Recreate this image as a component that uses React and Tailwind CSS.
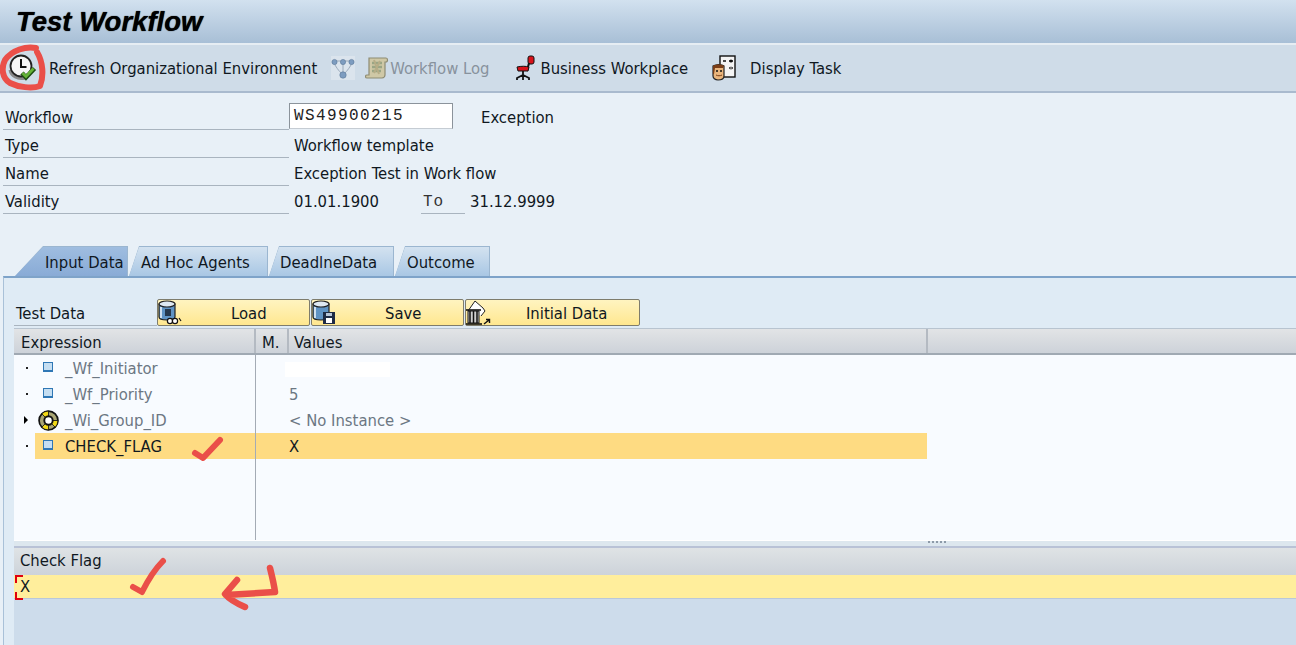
const F = "font-['DejaVu_Sans',sans-serif] [font-stretch:condensed]";

function ClockIcon() {
  return (
    <svg width="30" height="30" viewBox="0 0 30 30" className="shrink-0">
      <path d="M3 17c1 6 8 10 15 8" fill="none" stroke="#8a8a8a" strokeWidth="3" />
      <circle cx="14" cy="13" r="10.500" fill="#f6f6f6" stroke="#222" strokeWidth="1.800" />
      <path d="M14 6v8h5.500" fill="none" stroke="#111" strokeWidth="2" />
      <path d="M15 20l4 4.500 8.500-9" fill="none" stroke="#1f4d12" strokeWidth="4.500" />
      <path d="M15.500 20l3.500 3.500 7.500-8" fill="none" stroke="#64b236" strokeWidth="2.800" />
    </svg>
  );
}

function NetIcon() {
  return (
    <svg width="24" height="24" viewBox="0 0 24 24" className="shrink-0">
      <rect width="24" height="24" fill="#dbe4ed" />
      <path d="M3 7c3 6 6 9 9 12M21 7c-3 6-6 9-9 12M12 8v10M4 5h16" stroke="#9aa9ba" strokeWidth="1" fill="none" />
      <circle cx="3.500" cy="6" r="2.600" fill="#7d9cc0" stroke="#5c7999" strokeWidth=".6" />
      <circle cx="12" cy="6" r="2.600" fill="#7d9cc0" stroke="#5c7999" strokeWidth=".6" />
      <circle cx="20.500" cy="6" r="2.600" fill="#7d9cc0" stroke="#5c7999" strokeWidth=".6" />
      <circle cx="12" cy="19" r="3.200" fill="#7d9cc0" stroke="#5c7999" strokeWidth=".6" />
    </svg>
  );
}

function ScrollIcon() {
  return (
    <svg width="24" height="24" viewBox="0 0 24 24" className="shrink-0">
      <path d="M4 2h17c2 0 2 4 0 4h-1v13c0 1-1 3-3 3H2c-2 0-2-3 0-3h2z" fill="#cfc8a6" stroke="#8e8b72" strokeWidth="1.200" />
      <path d="M7 7h10M7 11h10M7 15h9" stroke="#9aa585" strokeWidth="2.400" />
      <path d="M9 4l5 14M15 5l-6 12" stroke="#b6ad87" strokeWidth="2" />
    </svg>
  );
}

function ChairIcon() {
  return (
    <svg width="22" height="26" viewBox="0 0 22 26" className="shrink-0">
      <rect x="13" y="1" width="6" height="8" rx="2" fill="#d8121a" stroke="#111" strokeWidth="1" />
      <path d="M14 8l-2 8" stroke="#111" strokeWidth="2" />
      <path d="M2 12c4-1 9-1 12 0l-1 4H3z" fill="#d8121a" stroke="#111" strokeWidth="1" />
      <path d="M8 16v4M2 25v-2l6-3 6 3v2M8 20v5" stroke="#111" strokeWidth="1.800" fill="none" />
    </svg>
  );
}

function TaskIcon() {
  return (
    <svg width="26" height="26" viewBox="0 0 26 26" className="shrink-0">
      <rect x="9" y="1" width="15" height="21" fill="#f4f4f4" stroke="#111" strokeWidth="1.400" />
      <path d="M12 6h3M18 6h4M18 13h4" stroke="#111" strokeWidth="1.500" />
      <circle cx="20" cy="6" r="1.500" fill="#111" />
      <circle cx="20" cy="13" r="1.500" fill="#777" />
      <path d="M2 11c3-2 9-2 11 0v10c0 3-3 4-6 4s-5-2-5-4z" fill="#eab67d" stroke="#222" strokeWidth="1.200" />
      <path d="M2 11c3-2 9-2 11 0l-1 2H4l-1 6H2z" fill="#7a3d16" />
      <circle cx="6" cy="16" r="1" fill="#111" />
      <circle cx="10" cy="16" r="1" fill="#111" />
      <path d="M5 20c2 1 4 1 6 0" stroke="#7a3d16" fill="none" />
    </svg>
  );
}

function DbIcon({ kind }) {
  return (
    <svg width="26" height="26" viewBox="0 0 26 26" className="shrink-0">
      <path d="M2 4v13c0 2 4 3 8 3s8-1 8-3V4z" fill="#5f93c4" stroke="#222" strokeWidth="1.200" />
      <ellipse cx="10" cy="4" rx="8" ry="3" fill="#dfe9f3" stroke="#222" strokeWidth="1.200" />
      <path d="M4 7v11" stroke="#cfe0f0" strokeWidth="2" />
      {kind === "load" ? (
        <g>
          <rect x="8" y="9" width="6" height="7" fill="#25384d" />
          <circle cx="13" cy="21" r="2.600" fill="#fff" stroke="#111" strokeWidth="1.200" />
          <circle cx="18" cy="21" r="2.600" fill="#fff" stroke="#111" strokeWidth="1.200" />
          <path d="M22 18l2 3" stroke="#111" strokeWidth="1.200" />
        </g>
      ) : (
        <g>
          <rect x="12" y="12" width="12" height="12" fill="#1e2b45" />
          <rect x="15" y="18" width="6" height="5" fill="#fff" />
          <rect x="15" y="13" width="6" height="3" fill="#b7c6d9" />
        </g>
      )}
    </svg>
  );
}

function TrashIcon() {
  return (
    <svg width="26" height="26" viewBox="0 0 26 26" className="shrink-0">
      <path d="M3 11L10 1l8 7 2 3-4 5" fill="#fff" stroke="#222" strokeWidth="1" />
      <path d="M1 10h15" stroke="#111" strokeWidth="1.600" />
      <path d="M3 11h11v12H3z" fill="#cfcfcf" stroke="#111" strokeWidth="1" />
      <path d="M5 11v12M8.500 11v12M12 11v12" stroke="#111" strokeWidth="1.500" />
      <path d="M1 24h16" stroke="#111" strokeWidth="1.600" />
      <path d="M19 24l5-4M21 19.500h3.500v3.500" stroke="#111" strokeWidth="1.400" fill="none" />
    </svg>
  );
}

function LeafIcon() {
  return (
    <span className="w-[10px] h-[10px] shrink-0 -mt-[3px] bg-[#c5def2] border border-[#2f77b5] border-b-2" />
  );
}

function LifeRing() {
  return (
    <svg width="21" height="21" viewBox="0 0 20 20" className="shrink-0">
      <circle cx="10" cy="10" r="9" fill="#a9a573" stroke="#111" strokeWidth="1.600" />
      <path d="M10 10L3.600 3.600A9 9 0 0 1 10 1zM10 10l9 0a9 9 0 0 1-2.600 6.400zM10 10l-6.400 6.400A9 9 0 0 0 10 19z" fill="#f2d916" stroke="#111" strokeWidth=".8" />
      <circle cx="10" cy="10" r="4" fill="#fff" stroke="#111" strokeWidth="1.800" />
    </svg>
  );
}

function Tab({ active, label, w, pad }) {
  const shape = active
    ? "[clip-path:polygon(28px_0,100%_0,100%_100%,0_100%)]"
    : "[clip-path:polygon(10px_0,100%_0,100%_100%,0_100%)]";
  return (
    <div className={`h-[30px] pt-[1px] pr-[1px] bg-[#9bb6d0] ${shape}`} style={{ width: w }}>
      <div
        className={`h-full flex items-center pt-[4px] text-[16.5px] text-[#10181f] ${shape} ${
          active ? "bg-gradient-to-b from-[#9fbde0] to-[#89abd6]" : "bg-gradient-to-b from-[#d3e2f0] to-[#a9c7e4]"
        }`}
        style={{ paddingLeft: pad }}
      >
        {label}
      </div>
    </div>
  );
}

function FormRow({ label, children }) {
  return (
    <div className="h-[28px] flex">
      <div className="w-[286px] border-b border-[#a9b4bf] flex items-center pl-[2px] pt-[6px] text-[#10181f]">{label}</div>
      <div className="flex items-center flex-1 pt-[5px]">{children}</div>
    </div>
  );
}

function Btn({ w, icon, label, textClass }) {
  return (
    <button className="h-[27px] flex items-center rounded-[2px] border border-[#7e7c6c] bg-gradient-to-b from-[#fff4c0] to-[#ffe78f] text-[16.5px] text-[#10181f] shrink-0" style={{ width: w }}>
      <span className="w-[26px] -ml-[1px] flex">{icon}</span>
      <span className={`${textClass} pt-[3px]`}>{label}</span>
    </button>
  );
}

function TreeRow({ icon, label, value, arrow, selected }) {
  return (
    <div className="h-[26px] flex text-[16.5px]">
      <div className="w-[21px] flex items-center justify-end pr-[7px] shrink-0">
        {arrow ? (
          <span className="w-0 h-0 border-y-[4px] border-y-transparent border-l-[4px] border-l-black" />
        ) : (
          <span className="w-[2px] h-[2px] bg-[#222]" />
        )}
      </div>
      <div className={`flex flex-1 items-center ${selected ? "bg-[#fedb82] text-[#10181f]" : "text-[#6c7783]"}`}>
        <span className="w-[30px] flex justify-center items-center shrink-0 pr-[4px]">{icon}</span>
        <span className="w-[224px] shrink-0 pt-[2px]">{label}</span>
        <span className="w-[638px] shrink-0 whitespace-pre pt-[2px]">{value}</span>
      </div>
      <div className="w-[369px] shrink-0" />
    </div>
  );
}

export default function App() {
  return (
    <div className={`${F} relative w-[1296px] h-[645px] overflow-hidden flex flex-col bg-[#e8f0f7] text-[16.5px] text-[#10181f]`}>
      {/* Title bar */}
      <div className="h-[43px] shrink-0 bg-gradient-to-b from-[#d2e1ef] to-[#a8bfd6] flex items-center pl-[16px]">
        <h1 className="font-['Liberation_Sans',Arial,sans-serif] text-[27.500px] font-bold italic text-black [text-shadow:0_0_1px_#000]">Test Workflow</h1>
      </div>

      {/* Toolbar */}
      <div className="h-[50px] shrink-0 bg-[#cfdce8] border-t-2 border-[#e6edf3] border-b-2 border-b-[#a9bace] flex items-center">
        <span className="ml-[7px]"><ClockIcon /></span>
        <span className="ml-[12px] pt-[2px]">Refresh Organizational Environment</span>
        <span className="ml-[14px]"><NetIcon /></span>
        <span className="ml-[10px]"><ScrollIcon /></span>
        <span className="ml-[1px] pt-[2px] text-[#88929d]">Workflow Log</span>
        <span className="ml-[26px]"><ChairIcon /></span>
        <span className="ml-[3px] pt-[2px]">Business Workplace</span>
        <span className="ml-[23px]"><TaskIcon /></span>
        <span className="ml-[13px] pt-[2px]">Display Task</span>
      </div>

      {/* Header form */}
      <div className="pt-[9px] pl-[3px] h-[153px] shrink-0 flex flex-col">
        <FormRow label="Workflow">
          <div className="w-[164px] h-[26px] -mt-[5px] bg-white border border-[#8b939b] border-b-[#c5ccd3] flex items-center pl-[4px] font-['Liberation_Mono',monospace] text-[16px] tracking-[1.400px] text-[#222]">
            WS49900215
          </div>
          <span className="ml-[28px]">Exception</span>
        </FormRow>
        <FormRow label="Type"><span className="ml-[5px]">Workflow template</span></FormRow>
        <FormRow label="Name"><span className="ml-[5px]">Exception Test in Work flow</span></FormRow>
        <FormRow label="Validity">
          <span className="ml-[5px] w-[127px]">01.01.1900</span>
          <span className="w-[44px] h-[28px] -mt-[5px] border-b border-[#a9b4bf] flex items-center pl-[2px] pt-[5px] font-['Liberation_Mono',monospace] text-[16px] tracking-[1px] text-[#333]">To</span>
          <span className="ml-[5px]">31.12.9999</span>
        </FormRow>
      </div>

      {/* Tabs */}
      <div className="h-[30px] shrink-0 flex pl-[15px] gap-[1px]">
        <Tab active label="Input Data" w={113} pad={30} />
        <Tab label="Ad Hoc Agents" w={139} pad={12} />
        <Tab label="DeadlneData" w={125} pad={11} />
        <Tab label="Outcome" w={95} pad={12} />
      </div>

      {/* Panel */}
      <div className="flex-1 min-h-0 ml-[3px] border-t-2 border-t-[#7ea3c9] border-l border-l-[#a9c1d8] bg-[#dfebf5] flex flex-col pl-[10px]">
        {/* Button row */}
        <div className="h-[50px] shrink-0 flex items-end pb-[2px] pt-[20px]">
          <div className="w-[143px] h-[27px] border-b border-[#a9b4bf] pl-[2px] pt-[3px] shrink-0">Test Data</div>
          <Btn w={153} icon={<DbIcon kind="load" />} label="Load" textClass="ml-[48px]" />
          <span className="w-[1px]" />
          <Btn w={153} icon={<DbIcon kind="save" />} label="Save" textClass="ml-[48px]" />
          <span className="w-[1px]" />
          <Btn w={175} icon={<TrashIcon />} label="Initial Data" textClass="ml-[35px]" />
        </div>

        {/* Table header */}
        <div className="h-[27px] shrink-0 flex border-t border-[#b8c4d0] border-b-2 border-b-[#a0a9b3] bg-gradient-to-b from-[#e2e4e6] to-[#cdd2d9]">
          <div className="w-[242px] border-r-2 border-[#b4bac2] pl-[7px] pt-[5px] flex items-center">Expression</div>
          <div className="w-[33px] border-r-2 border-[#b4bac2] pl-[6px] pt-[5px] flex items-center">M.</div>
          <div className="w-[639px] border-r-2 border-[#b4bac2] pl-[5px] pt-[5px] flex items-center">Values</div>
          <div className="flex-1" />
        </div>

        {/* Tree */}
        <div className="relative h-[185px] shrink-0 bg-[#f8fbff] overflow-hidden">
          <TreeRow icon={<LeafIcon />} label="_Wf_Initiator" value={<span className="block -ml-[4px] w-[105px] h-[15px] bg-white" />} />
          <TreeRow icon={<LeafIcon />} label="_Wf_Priority" value="5" />
          <TreeRow icon={<LifeRing />} label="_Wi_Group_ID" value="< No Instance >" arrow />
          <TreeRow icon={<LeafIcon />} label="CHECK_FLAG" value="X" selected />
          <div className="absolute left-[241px] top-0 bottom-0 w-[1px] bg-[#a4abb5]" />
        </div>

        {/* Splitter */}
        <div className="h-[6px] shrink-0 bg-[#dde7ee] border-t border-white flex justify-end items-start pr-[350px] gap-[2px]">
          <span className="w-[2px] h-[2px] bg-[#8d9aa8]" />
          <span className="w-[2px] h-[2px] bg-[#8d9aa8]" />
          <span className="w-[2px] h-[2px] bg-[#8d9aa8]" />
          <span className="w-[2px] h-[2px] bg-[#8d9aa8]" />
          <span className="w-[2px] h-[2px] bg-[#8d9aa8]" />
        </div>

        {/* Check flag */}
        <div className="h-[29px] shrink-0 flex items-center pl-[6px] border-t-2 border-t-[#b9c2d6] bg-gradient-to-b from-[#dfe3e5] to-[#cdd3da]">Check Flag</div>
        <div className="relative h-[24px] shrink-0 bg-[#ffee9c] border-b border-[#b9c8da] flex items-center pl-[6px] pt-[2px]">
          X
          <span className="absolute left-[1px] top-0 w-[8px] h-[8px] border-t-2 border-l-2 border-[#e0000f]" />
          <span className="absolute left-[1px] bottom-[-2px] w-[8px] h-[8px] border-b-2 border-l-2 border-[#e0000f]" />
        </div>
        <div className="flex-1 bg-[#cddceb]" />
      </div>

      {/* Hand-drawn annotations */}
      <svg className="absolute inset-0 pointer-events-none" width="1296" height="645" viewBox="0 0 1296 645" fill="none" stroke="#ea4f49" strokeLinecap="round" strokeLinejoin="round">
        <path d="M36 48C26 46 12 50 5 60C1 68 2 78 10 83C18 87 32 89 40 86C44 76 43 62 37 52" strokeWidth="6" />
        <path d="M195 453L203 458L220 440" strokeWidth="6" />
        <path d="M133 587L142 592C147 582 154 570 163 561" strokeWidth="6" />
        <path d="M270 568C272 576 274 584 275 592C259 593 243 594 226 595M237 580L225 594C230 600 238 604 245 607" strokeWidth="6.500" />
      </svg>
    </div>
  );
}
